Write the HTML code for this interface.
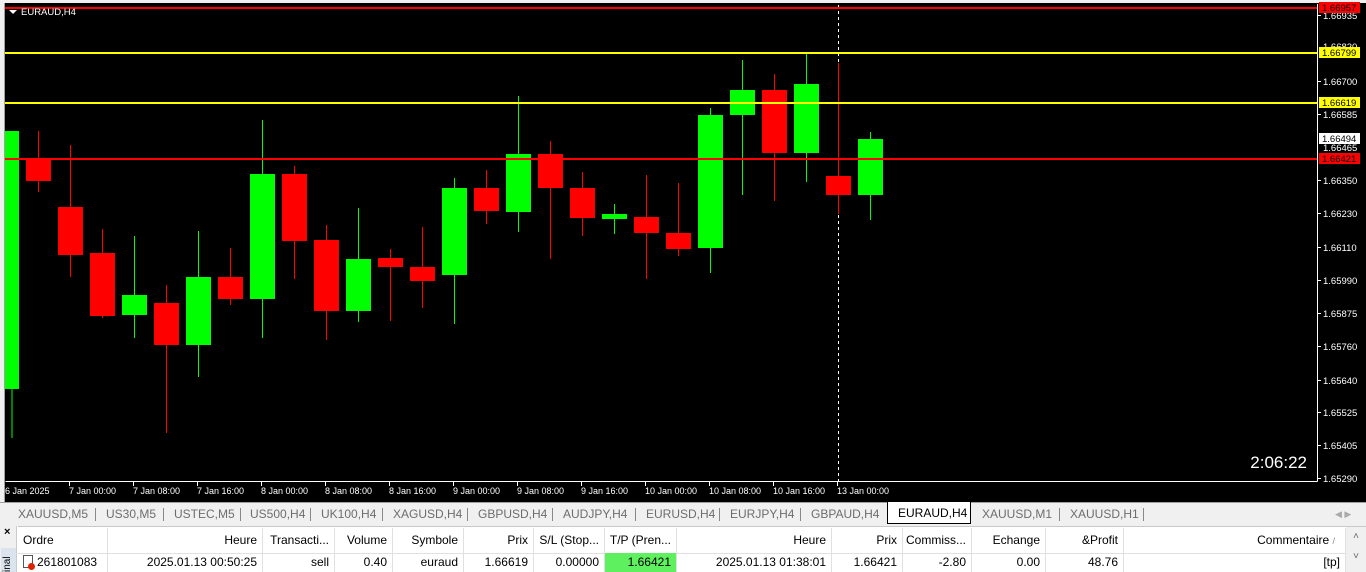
<!DOCTYPE html>
<html><head><meta charset="utf-8"><style>
*{margin:0;padding:0;box-sizing:border-box}
body{width:1366px;height:572px;overflow:hidden;background:#f0f0f0;font-family:"Liberation Sans",sans-serif;position:relative}
svg text{font-family:"Liberation Sans",sans-serif}
.tabs{position:absolute;left:0;top:502px;width:1366px;height:23px;background:#f0f0f0;border-top:1px solid #a0a0a0;font-size:12px;color:#6d6d6d}
.tab{position:absolute;top:4px}
.sep{position:absolute;top:5px;width:1px;height:13px;background:#888}
.grid{position:absolute;left:0;top:526px;width:1366px;height:46px;background:#fff;font-size:12px;color:#000}
.c{position:absolute;height:25px;line-height:25px;text-align:right;padding-right:5px;border-right:1px solid #e0e0e0;white-space:nowrap}
.r{position:absolute;height:19px;line-height:19px;text-align:right;padding-right:5px;border-right:1px solid #e0e0e0;white-space:nowrap}
</style></head><body>
<svg width="1366" height="502" style="position:absolute;left:0;top:0">
<rect width="1366" height="502" fill="#000"/>
<rect x="0" y="0" width="1366" height="3" fill="#f0f0f0"/>
<rect x="0" y="0" width="4" height="502" fill="#f0f0f0"/>
<rect x="4" y="3" width="1" height="499" fill="#a0a0a0"/>
<line x1="5.5" y1="481.5" x2="1317.5" y2="481.5" stroke="#fff"/>
<line x1="1317.5" y1="4" x2="1317.5" y2="481.5" stroke="#fff"/>
<line x1="838.5" y1="5" x2="838.5" y2="481" stroke="#fff" stroke-dasharray="3,3"/>
<g stroke-width="1">
<g id="c"></g>
</g>
<!-- candles -->
<g>
<line x1="12" y1="131" x2="12" y2="438" stroke="#0f0"/><rect x="5" y="131" width="14" height="258" fill="#0f0"/>
<line x1="38.5" y1="131" x2="38.5" y2="192" stroke="#f00"/><rect x="26" y="159" width="25" height="22" fill="#f00"/>
<line x1="70.5" y1="145" x2="70.5" y2="277" stroke="#f00"/><rect x="58" y="207" width="25" height="48" fill="#f00"/>
<line x1="102.5" y1="229" x2="102.5" y2="318" stroke="#f00"/><rect x="90" y="253" width="25" height="63" fill="#f00"/>
<line x1="134.5" y1="236" x2="134.5" y2="338" stroke="#0f0"/><rect x="122" y="295" width="25" height="20" fill="#0f0"/>
<line x1="166.5" y1="285" x2="166.5" y2="433" stroke="#f00"/><rect x="154" y="303" width="25" height="42" fill="#f00"/>
<line x1="198.5" y1="231" x2="198.5" y2="377" stroke="#0f0"/><rect x="186" y="277" width="25" height="68" fill="#0f0"/>
<line x1="230.5" y1="248" x2="230.5" y2="305" stroke="#f00"/><rect x="218" y="277" width="25" height="22" fill="#f00"/>
<line x1="262.5" y1="120" x2="262.5" y2="338" stroke="#0f0"/><rect x="250" y="174" width="25" height="125" fill="#0f0"/>
<line x1="294.5" y1="166" x2="294.5" y2="279" stroke="#f00"/><rect x="282" y="174" width="25" height="67" fill="#f00"/>
<line x1="326.5" y1="225" x2="326.5" y2="340" stroke="#f00"/><rect x="314" y="240" width="25" height="71" fill="#f00"/>
<line x1="358.5" y1="208" x2="358.5" y2="322" stroke="#0f0"/><rect x="346" y="259" width="25" height="52" fill="#0f0"/>
<line x1="390.5" y1="249" x2="390.5" y2="321" stroke="#f00"/><rect x="378" y="258" width="25" height="9" fill="#f00"/>
<line x1="422.5" y1="227" x2="422.5" y2="308" stroke="#f00"/><rect x="410" y="267" width="25" height="14" fill="#f00"/>
<line x1="454.5" y1="178" x2="454.5" y2="324" stroke="#0f0"/><rect x="442" y="188" width="25" height="87" fill="#0f0"/>
<line x1="486.5" y1="170" x2="486.5" y2="224" stroke="#f00"/><rect x="474" y="188" width="25" height="23" fill="#f00"/>
<line x1="518.5" y1="96" x2="518.5" y2="232" stroke="#0f0"/><rect x="506" y="154" width="25" height="58" fill="#0f0"/>
<line x1="550.5" y1="141" x2="550.5" y2="259" stroke="#f00"/><rect x="538" y="154" width="25" height="34" fill="#f00"/>
<line x1="582.5" y1="172" x2="582.5" y2="236" stroke="#f00"/><rect x="570" y="188" width="25" height="30" fill="#f00"/>
<line x1="614.5" y1="204" x2="614.5" y2="234" stroke="#0f0"/><rect x="602" y="214" width="25" height="5" fill="#0f0"/>
<line x1="646.5" y1="175" x2="646.5" y2="279" stroke="#f00"/><rect x="634" y="217" width="25" height="16" fill="#f00"/>
<line x1="678.5" y1="183" x2="678.5" y2="256" stroke="#f00"/><rect x="666" y="233" width="25" height="16" fill="#f00"/>
<line x1="710.5" y1="108" x2="710.5" y2="273" stroke="#0f0"/><rect x="698" y="115" width="25" height="133" fill="#0f0"/>
<line x1="742.5" y1="60" x2="742.5" y2="195" stroke="#0f0"/><rect x="730" y="90" width="25" height="25" fill="#0f0"/>
<line x1="774.5" y1="74" x2="774.5" y2="201" stroke="#f00"/><rect x="762" y="90" width="25" height="63" fill="#f00"/>
<line x1="806.5" y1="54" x2="806.5" y2="182" stroke="#0f0"/><rect x="794" y="84" width="25" height="69" fill="#0f0"/>
<line x1="838.5" y1="63" x2="838.5" y2="214" stroke="#f00"/><rect x="826" y="176" width="25" height="19" fill="#f00"/>
<line x1="870.5" y1="132" x2="870.5" y2="220" stroke="#0f0"/><rect x="858" y="139" width="25" height="56" fill="#0f0"/>
</g>
<rect x="5" y="7" width="1312" height="2" fill="#f00"/>
<rect x="5" y="52" width="1312" height="2" fill="#ff0"/>
<rect x="5" y="102" width="1312" height="2" fill="#ff0"/>
<rect x="5" y="158" width="1312" height="2" fill="#f00"/>
<polygon points="9,10 17,10 13,14" fill="#fff"/>
<text x="21" y="15" font-size="9.5" fill="#fff">EURAUD,H4</text>
<text x="1307" y="468" font-size="17" fill="#fff" text-anchor="end">2:06:22</text>
<g font-size="9.5" fill="#fff">
<text x="1323" y="19">1.66935</text>
<text x="1323" y="85">1.66700</text>
<text x="1323" y="118">1.66585</text>
<text x="1323" y="151">1.66465</text>
<text x="1323" y="184">1.66350</text>
<text x="1323" y="217">1.66230</text>
<text x="1323" y="251">1.66110</text>
<text x="1323" y="284">1.65990</text>
<text x="1323" y="317">1.65875</text>
<text x="1323" y="350">1.65760</text>
<text x="1323" y="384">1.65640</text>
<text x="1323" y="416">1.65525</text>
<text x="1323" y="449">1.65405</text>
<text x="1323" y="482">1.65290</text>
</g>
<g stroke="#fff"><line x1="1318" y1="15.5" x2="1321" y2="15.5"/><line x1="1318" y1="81.5" x2="1321" y2="81.5"/><line x1="1318" y1="114.5" x2="1321" y2="114.5"/><line x1="1318" y1="180.5" x2="1321" y2="180.5"/><line x1="1318" y1="213.5" x2="1321" y2="213.5"/><line x1="1318" y1="247.5" x2="1321" y2="247.5"/><line x1="1318" y1="280.5" x2="1321" y2="280.5"/><line x1="1318" y1="313.5" x2="1321" y2="313.5"/><line x1="1318" y1="346.5" x2="1321" y2="346.5"/><line x1="1318" y1="380.5" x2="1321" y2="380.5"/><line x1="1318" y1="412.5" x2="1321" y2="412.5"/><line x1="1318" y1="445.5" x2="1321" y2="445.5"/><line x1="1318" y1="478.5" x2="1321" y2="478.5"/></g>
<text x="1323" y="50" font-size="9.5" fill="#fff">1.66820</text>
<rect x="1319" y="2" width="41" height="11" fill="#f00"/><text x="1322" y="11" font-size="9.5" fill="#000">1.66957</text>
<rect x="1319" y="47" width="41" height="11" fill="#ff0"/><text x="1322" y="56" font-size="9.5" fill="#000">1.66799</text>
<rect x="1319" y="97" width="41" height="11" fill="#ff0"/><text x="1322" y="106" font-size="9.5" fill="#000">1.66619</text>
<rect x="1319" y="133" width="41" height="11" fill="#fff"/><text x="1322" y="142" font-size="9.5" fill="#000">1.66494</text>
<rect x="1319" y="153" width="41" height="11" fill="#f00"/><text x="1322" y="162" font-size="9.5" fill="#000">1.66421</text>
<g font-size="9" fill="#fff">
<text x="5" y="494">6 Jan 2025</text>
<text x="69" y="494">7 Jan 00:00</text>
<text x="133" y="494">7 Jan 08:00</text>
<text x="197" y="494">7 Jan 16:00</text>
<text x="261" y="494">8 Jan 00:00</text>
<text x="325" y="494">8 Jan 08:00</text>
<text x="389" y="494">8 Jan 16:00</text>
<text x="453" y="494">9 Jan 00:00</text>
<text x="517" y="494">9 Jan 08:00</text>
<text x="581" y="494">9 Jan 16:00</text>
<text x="645" y="494">10 Jan 00:00</text>
<text x="709" y="494">10 Jan 08:00</text>
<text x="773" y="494">10 Jan 16:00</text>
<text x="837" y="494">13 Jan 00:00</text>
</g>
<g stroke="#fff"><line x1="69.5" y1="482" x2="69.5" y2="486"/><line x1="133.5" y1="482" x2="133.5" y2="486"/><line x1="197.5" y1="482" x2="197.5" y2="486"/><line x1="261.5" y1="482" x2="261.5" y2="486"/><line x1="325.5" y1="482" x2="325.5" y2="486"/><line x1="389.5" y1="482" x2="389.5" y2="486"/><line x1="453.5" y1="482" x2="453.5" y2="486"/><line x1="517.5" y1="482" x2="517.5" y2="486"/><line x1="581.5" y1="482" x2="581.5" y2="486"/><line x1="645.5" y1="482" x2="645.5" y2="486"/><line x1="709.5" y1="482" x2="709.5" y2="486"/><line x1="773.5" y1="482" x2="773.5" y2="486"/><line x1="837.5" y1="482" x2="837.5" y2="486"/></g>
</svg>
<div class="tabs">
<span class="tab" style="left:18px">XAUUSD,M5</span><div class="sep" style="left:95px"></div>
<span class="tab" style="left:106px">US30,M5</span><div class="sep" style="left:163px"></div>
<span class="tab" style="left:174px">USTEC,M5</span><div class="sep" style="left:240px"></div>
<span class="tab" style="left:250px">US500,H4</span><div class="sep" style="left:310px"></div>
<span class="tab" style="left:321px">UK100,H4</span><div class="sep" style="left:382px"></div>
<span class="tab" style="left:393px">XAGUSD,H4</span><div class="sep" style="left:467px"></div>
<span class="tab" style="left:478px">GBPUSD,H4</span><div class="sep" style="left:552px"></div>
<span class="tab" style="left:563px">AUDJPY,H4</span><div class="sep" style="left:635px"></div>
<span class="tab" style="left:646px">EURUSD,H4</span><div class="sep" style="left:719px"></div>
<span class="tab" style="left:730px">EURJPY,H4</span><div class="sep" style="left:800px"></div>
<span class="tab" style="left:811px">GBPAUD,H4</span>
<div style="position:absolute;left:887px;top:-1px;width:84px;height:22px;background:#fff;border:1px solid #000;border-top:none;color:#000;padding:4px 0 0 10px">EURAUD,H4</div>
<span class="tab" style="left:982px">XAUUSD,M1</span><div class="sep" style="left:1059px"></div>
<span class="tab" style="left:1070px">XAUUSD,H1</span><div class="sep" style="left:1143px"></div>
<span class="tab" style="left:1335px;color:#aaa;font-size:9px;top:6px">◀ ▶</span>
</div>
<div class="grid">
<div style="position:absolute;left:0;top:0;width:17px;height:46px;background:#f0f0f0;border-right:1px solid #ccc"><div style="font-size:11px;font-weight:bold;padding-left:4px">×</div><div style="position:absolute;left:1px;top:22px;width:15px;height:24px;background:#dbe4ee;font-size:10px;writing-mode:vertical-rl;transform:rotate(180deg);line-height:14px">inal</div></div>
<div style="position:absolute;left:18px;top:0;width:1348px;height:1px;background:#c8c8c8"></div>
<div class="c" style="left:18px;width:90px;text-align:left;padding-left:5px;top:2px">Ordre</div>
<div class="c" style="left:108px;width:155px;top:2px">Heure</div>
<div class="c" style="left:263px;width:72px;top:2px">Transacti...</div>
<div class="c" style="left:335px;width:58px;top:2px">Volume</div>
<div class="c" style="left:393px;width:71px;top:2px">Symbole</div>
<div class="c" style="left:464px;width:70px;top:2px">Prix</div>
<div class="c" style="left:534px;width:71px;top:2px">S/L (Stop...</div>
<div class="c" style="left:605px;width:72px;top:2px">T/P (Pren...</div>
<div class="c" style="left:677px;width:155px;top:2px">Heure</div>
<div class="c" style="left:832px;width:71px;top:2px">Prix</div>
<div class="c" style="left:903px;width:69px;top:2px">Commiss...</div>
<div class="c" style="left:972px;width:74px;top:2px">Echange</div>
<div class="c" style="left:1046px;width:78px;top:2px">&amp;Profit</div>
<div class="c" style="left:1124px;width:222px;top:2px;padding-right:10px">Commentaire <span style="color:#888;font-size:9px">/</span></div>
<div style="position:absolute;left:18px;top:27px;width:1328px;height:1px;background:#e0e0e0"></div>
<div class="r" style="left:18px;width:90px;text-align:left;padding-left:5px;top:27px"><span style="display:inline-block;width:10px;height:13px;border:1px solid #555;vertical-align:-2px;margin-right:4px;position:relative"><span style="position:absolute;right:-3px;bottom:-3px;width:7px;height:7px;border-radius:50%;background:#e02000"></span></span>261801083</div>
<div class="r" style="left:108px;width:155px;top:27px">2025.01.13 00:50:25</div>
<div class="r" style="left:263px;width:72px;top:27px">sell</div>
<div class="r" style="left:335px;width:58px;top:27px">0.40</div>
<div class="r" style="left:393px;width:71px;top:27px">euraud</div>
<div class="r" style="left:464px;width:70px;top:27px">1.66619</div>
<div class="r" style="left:534px;width:71px;top:27px">0.00000</div>
<div class="r" style="left:605px;width:72px;top:27px;background:#5ef05e">1.66421</div>
<div class="r" style="left:677px;width:155px;top:27px">2025.01.13 01:38:01</div>
<div class="r" style="left:832px;width:71px;top:27px">1.66421</div>
<div class="r" style="left:903px;width:69px;top:27px">-2.80</div>
<div class="r" style="left:972px;width:74px;top:27px">0.00</div>
<div class="r" style="left:1046px;width:78px;top:27px">48.76</div>
<div class="r" style="left:1124px;width:222px;top:27px">[tp]</div>
<div style="position:absolute;left:1346px;top:1px;width:20px;height:45px;background:#f0f0f0;font-size:10px;color:#666;text-align:center;line-height:20px">˄<br>˅</div>
</div>
</body></html>
